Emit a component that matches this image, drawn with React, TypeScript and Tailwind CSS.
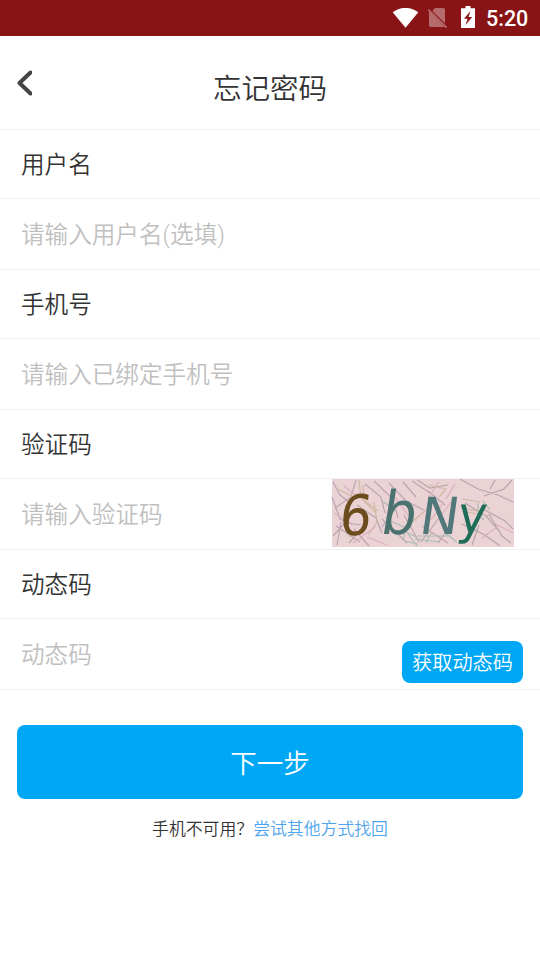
import type { ReactNode } from 'react';

type FieldProps = {
  label: string;
  placeholder: string;
  children?: ReactNode;
};

function StatusBar() {
  return (
    <div className="flex h-9 items-center bg-[#881416] pl-[392px] text-white">
      <svg className="h-5 w-[27px]" viewBox="0 0 27 20" fill="currentColor">
        <path d="M.7 4.3C8.2-1.6 18.8-1.6 26.3 4.3L13.5 19.7Z" />
      </svg>
      <svg className="ml-2 h-[22px] w-[22px]" viewBox="0 0 22 22">
        <path d="M8 1h8.3Q18 1 18 2.7v13.8L5.3 4Z" fill="#b56a6b" />
        <path d="M2 4v14.3Q2 20 3.7 20h12.6l1-.3Z" fill="#b56a6b" />
        <path d="m1.3 2.6 18.2 18" stroke="#b56a6b" strokeWidth="1.7" />
      </svg>
      <svg className="mt-[-2px] ml-3 h-[22px] w-[14px]" viewBox="0 0 14 22">
        <path d="M4.5 0h5v2.2H14V22H0V2.2h4.5Z" fill="currentColor" />
        <path d="M9.5 5 3 12.8h3.6L4.4 19.2 11.2 11H7.6Z" fill="#881416" />
      </svg>
      <span className="ml-[11px] pt-0.5 text-[21.5px] leading-none font-medium">5:20</span>
    </div>
  );
}

function Field({ label, placeholder, children }: FieldProps) {
  return (
    <div className="text-[23.6px]">
      <div className="flex h-[69px] items-center border-b border-[#f2f2f2] pt-[3px] pl-[21px] text-[#333333]">
        {label}
      </div>
      <div className="flex h-[71px] items-start border-b border-[#f2f2f2] pl-[21px]">
        <span className="flex h-[69px] flex-1 items-center pt-1 text-[#c0c0c0]">{placeholder}</span>
        {children}
      </div>
    </div>
  );
}

function Captcha() {
  return (
    <svg className="mr-[26px] h-[68px] w-[182px] overflow-visible" viewBox="0 0 182 68">
      <rect width="182" height="68" fill="#ebd2d5" />
      <g fill="none" strokeWidth="1.2" opacity="0.52">
        <path
          stroke="#947c91"
          d="M1 3l7 13 12 9M3 29l16-11 5-17M0 18l8 22 12 5M1 57l12-13 16 2M5 66l4-23M17 64l18-21M25 26l19 13 6 15M33 5l16 13 4 16M42 2l19 18 5 19M50 48l16-22 12-4M57 4l17 18 18 9M71 3l13 15M80 2l18 12M50 40l25 24M72 36l15 27M107 39l-18 24M122 42l-16 22M4 47l24 16M22 50l15 17M90 47l26 17"
        />
        <path
          stroke="#8b7d88"
          d="M128 0l18 10 20 6 15 7M158 10l5-9M152 17l20-7 8-9M133 24l22 14 13 15M151 30l22 12 8 8M157 35l13 22 9 7M130 45l23 11 15 11M140 66l7-20M85 1l13 8 18-3M96 12l17 14"
        />
        <path
          stroke="#b8a578"
          d="M27 1l2 18 14 14M31 6l1 15 14 11M6 10l15 8M36 56l9-13-3-20M17 58l19-12M97 6l17 4-7 8M130 20l18 3M129 29l17 3 8-4M134 33l24 4M95 30l-15 13"
        />
        <path
          stroke="#70aa96"
          d="M50 22l13 9-9 8M54 40l20 9-3 12M70 51l14 7M76 55l9 12M86 57h33M83 60l25 3M99 54l-5 10M113 54l12 9M146 24v12l6 5M151 22l7 9M73 62l13 3"
        />
        <path
          stroke="#cf91ae"
          d="M2 34l17 10M12 7l12 10M21 64l22-16M59 13l19 26M107 3l-11 16M112 23l-13 18M104 43l15-20M160 43l21 11M150 59l15-11M123 5l-9 15M35 58l20 8"
        />
      </g>
      <g fontFamily="DejaVu Sans, sans-serif" fontWeight="400">
        <text transform="translate(6 56) skewX(-6)" fontSize="56" textLength="32" lengthAdjust="spacingAndGlyphs" fill="#6b4c1d">6</text>
        <text transform="translate(47 55) skewX(-9)" fontSize="60" textLength="35" lengthAdjust="spacingAndGlyphs" fill="#4a7370">b</text>
        <text transform="translate(86 55) skewX(-8)" fontSize="51" textLength="39" lengthAdjust="spacingAndGlyphs" fill="#50777a">N</text>
        <text transform="translate(124 54) skewX(-7)" fontSize="52" textLength="29" lengthAdjust="spacingAndGlyphs" fill="#1e6d59">y</text>
      </g>
    </svg>
  );
}

export default function App() {
  return (
    <main className="min-h-[960px] w-[540px] bg-white font-[Roboto,'Noto_Sans_CJK_SC',sans-serif] text-[#333333]">
      <StatusBar />
      <header className="flex h-[94px] items-center border-b border-[#f2f2f2]">
        <button className="ml-4 w-4" aria-label="返回">
          <svg className="mt-px h-[26px] w-4" viewBox="0 0 16 26" fill="none">
            <path d="M14.5 2.5 3.5 13l11 10.5" stroke="#444" strokeWidth="4" strokeLinejoin="round" strokeLinecap="round" />
          </svg>
        </button>
        <h1 className="flex-1 pt-[15px] pr-8 text-center text-[28.5px] font-[350]">忘记密码</h1>
      </header>

      <div className="font-[350]">
        <Field label="用户名" placeholder="请输入用户名(选填)" />
        <Field label="手机号" placeholder="请输入已绑定手机号" />
        <Field label="验证码" placeholder="请输入验证码">
          <Captcha />
        </Field>
        <Field label="动态码" placeholder="动态码">
          <button className="mt-[22px] mr-[17px] h-[42px] w-[121px] rounded-lg bg-[#00a7f5] pt-0.5 text-[20.2px] text-white">
            获取动态码
          </button>
        </Field>

        <div className="px-[17px] pt-[35px]">
          <button className="h-[74px] w-full rounded-lg bg-[#00a7f5] pt-1 text-[26.5px] text-white">
            下一步
          </button>
        </div>
        <p className="mt-[18px] text-center text-[16.85px] leading-6">
          手机不可用？<a className="text-[#50a5ee]">尝试其他方式找回</a>
        </p>
      </div>
    </main>
  );
}
